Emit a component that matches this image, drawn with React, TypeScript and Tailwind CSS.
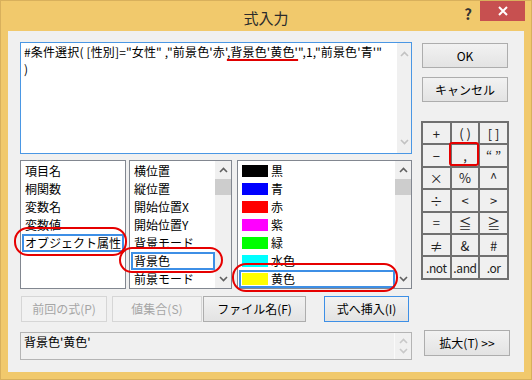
import React from "react";

function Chevron({ up, color }: { up: boolean; color: string }) {
  return (
    <svg width="9" height="6" viewBox="0 0 9 6">
      <path
        d={up ? "M1 5 L4.5 1.5 L8 5" : "M1 1 L4.5 4.5 L8 1"}
        fill="none"
        stroke={color}
        strokeWidth="1.6"
      />
    </svg>
  );
}

function ListScrollbar() {
  return (
    <div className="w-[16px] h-full bg-[#f0f0f0] flex flex-col items-center">
      <div className="h-[18px] flex items-center justify-center">
        <Chevron up color="#606060" />
      </div>
      <div className="w-[16px] h-[16px] bg-[#cdcdcd]" />
      <div className="flex-1" />
      <div className="h-[18px] flex items-center justify-center">
        <Chevron up={false} color="#606060" />
      </div>
    </div>
  );
}

function Item({ text, selected }: { text: string; selected?: boolean }) {
  return (
    <div
      className={
        "h-[18px] flex items-center text-[12px] leading-none whitespace-nowrap " +
        (selected ? "border-2 border-[#3d8fe6] pl-[1px]" : "pl-[3px]")
      }
    >
      {text}
    </div>
  );
}

function ColorItem({ color, text, selected }: { color: string; text: string; selected?: boolean }) {
  return (
    <div
      className={
        "h-[18px] flex items-center gap-[3px] text-[12px] leading-none whitespace-nowrap " +
        (selected ? "border-2 border-[#3d8fe6] pl-[1px]" : "pl-[3px]")
      }
    >
      <div className="w-[26px] h-[12px]" style={{ backgroundColor: color }} />
      <span>{text}</span>
    </div>
  );
}

function Btn({
  children,
  w,
  kind,
}: {
  children: React.ReactNode;
  w: string;
  kind: "normal" | "disabled" | "default";
}) {
  const base =
    "h-full flex items-center justify-center text-[12px] leading-none whitespace-nowrap border ";
  const k =
    kind === "disabled"
      ? "border-[#d6d6d6] bg-[#f2f2f2] text-[#a6a6a6]"
      : kind === "default"
      ? "border-[#3d8fe6] bg-gradient-to-b from-[#f2f2f2] to-[#e3e3e3] text-black"
      : "border-[#adadad] bg-gradient-to-b from-[#f2f2f2] to-[#e3e3e3] text-black";
  return <div className={base + k + " " + w}>{children}</div>;
}

const ops = [
  "+", "( )", "[ ]",
  "−", ",", "“ ”",
  "×", "%", "^",
  "÷", "<", ">",
  "=", "≦", "≧",
  "≠", "&", "#",
  ".not", ".and", ".or",
];

export default function App() {
  return (
    <div className="w-[532px] h-[380px] bg-[#f1c96c] border border-[#d8b05c] flex flex-col font-['Noto_Sans_CJK_JP','Noto_Sans',sans-serif] text-black overflow-hidden">
      {/* title bar */}
      <div className="relative h-[30px] shrink-0 flex items-center justify-center">
        <span className="text-[15px] text-[#2b2b2b] leading-none mt-[2px]">式入力</span>
        <div className="absolute right-[6px] top-0 flex items-start">
          <span className="text-[15px] font-bold text-[#333] leading-none mt-[5px] mr-[8px]">?</span>
          <div className="w-[45px] h-[20px] bg-[#c75050] flex items-center justify-center">
            <svg width="10" height="10" viewBox="0 0 10 10">
              <path d="M1 1 L9 9 M9 1 L1 9" stroke="white" strokeWidth="2" />
            </svg>
          </div>
        </div>
      </div>

      {/* client */}
      <div className="relative ml-[7px] mr-[7px] mb-[7px] flex-1 bg-[#f0f0f0] pl-[12px] pt-[11px] pb-[12px] flex">
        {/* left column */}
        <div className="w-[392px] flex flex-col">
          {/* formula textarea */}
          <div className="h-[112px] border border-[#4a97e4] bg-white flex">
            <div className="flex-1 pl-[3px] pt-0 text-[12px] leading-[17px] tracking-[0.15px] whitespace-nowrap overflow-hidden">
              <div>
                #条件選択( [性別]="女性" ,"前景色'赤'
                <span className="underline decoration-2 decoration-[#e00000] underline-offset-[2px]">,背景色'黄色'</span>
                ",1,"前景色'青'"
              </div>
              <div>)</div>
            </div>
            <div className="w-[14px] bg-[#f0f0f0] flex flex-col items-center justify-between py-[8px]">
              <Chevron up color="#c2c2c2" />
              <Chevron up={false} color="#c2c2c2" />
            </div>
          </div>

          {/* lists */}
          <div className="mt-[6px] h-[129px] flex">
            <div className="w-[106px] h-full border border-[#828790] bg-white pt-[1px] px-[1px]">
              <Item text="項目名" />
              <Item text="桐関数" />
              <Item text="変数名" />
              <Item text="変数値" />
              <Item text="オブジェクト属性" selected />
            </div>
            <div className="ml-[3px] w-[103px] h-full border border-[#828790] bg-white flex">
              <div className="flex-1 pt-[1px] pl-[1px] overflow-hidden">
                <Item text="横位置" />
                <Item text="縦位置" />
                <Item text="開始位置X" />
                <Item text="開始位置Y" />
                <Item text="背景モード" />
                <Item text="背景色" selected />
                <Item text="前景モード" />
              </div>
              <ListScrollbar />
            </div>
            <div className="ml-[5px] w-[175px] h-full border border-[#828790] bg-white flex">
              <div className="flex-1 pt-[1px] pl-[1px] overflow-hidden">
                <ColorItem color="#000000" text="黒" />
                <ColorItem color="#0000ff" text="青" />
                <ColorItem color="#ff0000" text="赤" />
                <ColorItem color="#ff00ff" text="紫" />
                <ColorItem color="#00ff00" text="緑" />
                <ColorItem color="#00ffff" text="水色" />
                <ColorItem color="#ffff00" text="黄色" selected />
              </div>
              <ListScrollbar />
            </div>
          </div>

          {/* buttons */}
          <div className="mt-[7px] h-[26px] flex pl-[1px]">
            <Btn w="w-[86px]" kind="disabled">前回の式(P)</Btn>
            <div className="w-[5px]" />
            <Btn w="w-[90px]" kind="disabled">値集合(S)</Btn>
            <div className="w-[1px]" />
            <Btn w="w-[103px]" kind="normal">ファイル名(F)</Btn>
            <div className="w-[18px]" />
            <Btn w="w-[85px]" kind="default">式へ挿入(I)</Btn>
          </div>

          {/* bottom box */}
          <div className="mt-[10px] h-[28px] border border-[#b4b4b4] bg-[#f0f0f0] flex">
            <div className="flex-1 pl-[3px] pt-[1px] text-[12px] leading-[15px]">背景色'黄色'</div>
            <div className="w-[17px] border-l border-[#fafafa] flex flex-col items-center justify-between py-[5px]">
              <Chevron up color="#c8c8c8" />
              <Chevron up={false} color="#c8c8c8" />
            </div>
          </div>
        </div>

        {/* right column */}
        <div className="ml-[9px] w-[89px] flex flex-col">
          <div className="ml-[1px] mt-[1px]">
            <div className="h-[25px] w-[86px]">
              <Btn w="w-[86px]" kind="normal">OK</Btn>
            </div>
            <div className="mt-[9px] h-[25px] w-[86px]">
              <Btn w="w-[86px]" kind="normal">キャンセル</Btn>
            </div>
          </div>
          <div className="mt-[19px] w-[88px] bg-[#707070] p-[2px] grid grid-cols-3 gap-[2px]">
            {ops.map((o, i) => (
              <div
                key={i}
                className={
                  "h-[20.4px] bg-[#f0f0f0] flex items-center justify-center leading-none text-[#222] " +
                  (o.startsWith(".") ? "text-[12px] tracking-[-0.4px]" : "text-[13px]")
                }
              >
                {o}
              </div>
            ))}
          </div>
          <div className="mt-auto mb-[4px] ml-[3px] h-[26px] w-[86px]">
            <Btn w="w-[86px]" kind="normal">拡大(T) &gt;&gt;</Btn>
          </div>
        </div>

        {/* red annotation marks */}
        <div className="absolute left-[6px] top-[196px] w-[113px] h-[29px] border-2 border-[#e60000] rounded-[14px]" />
        <div className="absolute left-[111px] top-[216px] w-[104px] h-[26px] border-2 border-[#e60000] rounded-[13px]" />
        <div className="absolute left-[224px] top-[232px] w-[166px] h-[29px] border-2 border-[#e60000] rounded-[14px]" />
        <div className="absolute left-[441px] top-[111px] w-[30px] h-[24px] border-2 border-[#e60000] rounded-[3px]" />
      </div>
    </div>
  );
}
